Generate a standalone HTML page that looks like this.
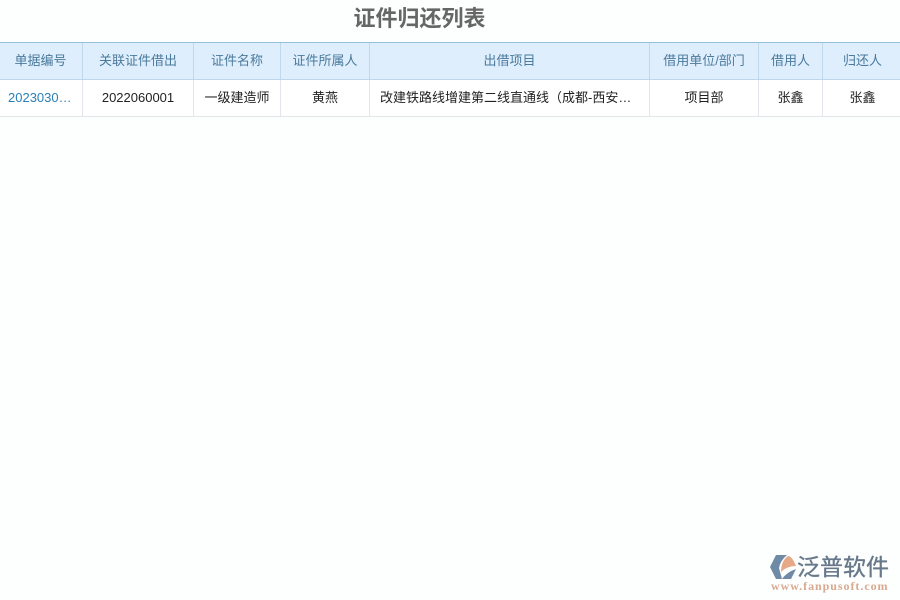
<!DOCTYPE html>
<html lang="zh">
<head>
<meta charset="utf-8">
<style>
html,body{margin:0;padding:0;width:900px;height:600px;overflow:hidden;background:#fdfefe;font-family:"Liberation Sans","Noto Sans CJK SC",sans-serif}
.a{position:absolute;white-space:nowrap}
.title{left:0;top:3px;width:839px;text-align:center;font-size:22px;line-height:32px;font-weight:bold;color:#666}
.hb{left:0;top:42px;width:900px;background:#deeefc;border-top:1px solid #96bfd9;border-bottom:1px solid #bcd7ec;box-sizing:content-box;height:36px}
.rb{left:0;top:80px;width:900px;height:36px;background:#fff;border-bottom:1px solid #e3e6e8}
.v{width:1px;background:#c0d8ec;top:43px;height:36px}
.v2{width:1px;background:#e2e6ea;top:80px;height:36px}
.c{text-align:center;font-size:13px;line-height:20px}
.h{top:51px;color:#4a7a9c}
.d{top:88px;color:#222}
</style>
</head>
<body>
<div class="a title">证件归还列表</div>
<div class="a hb"></div>
<div class="a rb"></div>
<div class="a v" style="left:82px"></div><div class="a v" style="left:193px"></div><div class="a v" style="left:280px"></div><div class="a v" style="left:369px"></div><div class="a v" style="left:649px"></div><div class="a v" style="left:758px"></div><div class="a v" style="left:822px"></div>
<div class="a v2" style="left:82px"></div><div class="a v2" style="left:193px"></div><div class="a v2" style="left:280px"></div><div class="a v2" style="left:369px"></div><div class="a v2" style="left:649px"></div><div class="a v2" style="left:758px"></div><div class="a v2" style="left:822px"></div>

<div class="a c h" style="left:0;width:81px">单据编号</div>
<div class="a c h" style="left:83px;width:110px">关联证件借出</div>
<div class="a c h" style="left:194px;width:86px">证件名称</div>
<div class="a c h" style="left:281px;width:88px">证件所属人</div>
<div class="a c h" style="left:370px;width:279px">出借项目</div>
<div class="a c h" style="left:650px;width:108px">借用单位/部门</div>
<div class="a c h" style="left:759px;width:63px">借用人</div>
<div class="a c h" style="left:824px;width:77px">归还人</div>

<div class="a c d" style="left:8px;color:#2b7fb8">2023030…</div>
<div class="a c d" style="left:83px;width:110px">2022060001</div>
<div class="a c d" style="left:194px;width:86px">一级建造师</div>
<div class="a c d" style="left:281px;width:88px">黄燕</div>
<div class="a c d" style="left:380px">改建铁路线增建第二线直通线（成都-西安…</div>
<div class="a c d" style="left:650px;width:108px">项目部</div>
<div class="a c d" style="left:759px;width:63px">张鑫</div>
<div class="a c d" style="left:824px;width:77px">张鑫</div>

<svg class="a" style="left:769px;top:554px" width="28" height="26" viewBox="0 0 28 26">
<path d="M7 1H18Q11 7 10 14L13 25H7L1 13Z" fill="#6f8aa5"/>
<path d="M12 18Q12 7 19 2Q23 2 27 12Q18 12 12 18Z" fill="#e6a988"/>
<path d="M13 25Q18 18 27 15L22 25Z" fill="#6f8aa5"/>
</svg>
<div class="a" style="left:797px;top:553px;font-size:23px;line-height:28px;color:#66788a;-webkit-text-stroke:.35px #66788a">泛普软件</div>
<div class="a" style="left:771px;top:580px;font-family:'Liberation Serif',serif;font-size:12px;font-weight:bold;line-height:13px;color:#d9a98f;letter-spacing:.95px">www.fanpusoft.com</div>
</body>
</html>
